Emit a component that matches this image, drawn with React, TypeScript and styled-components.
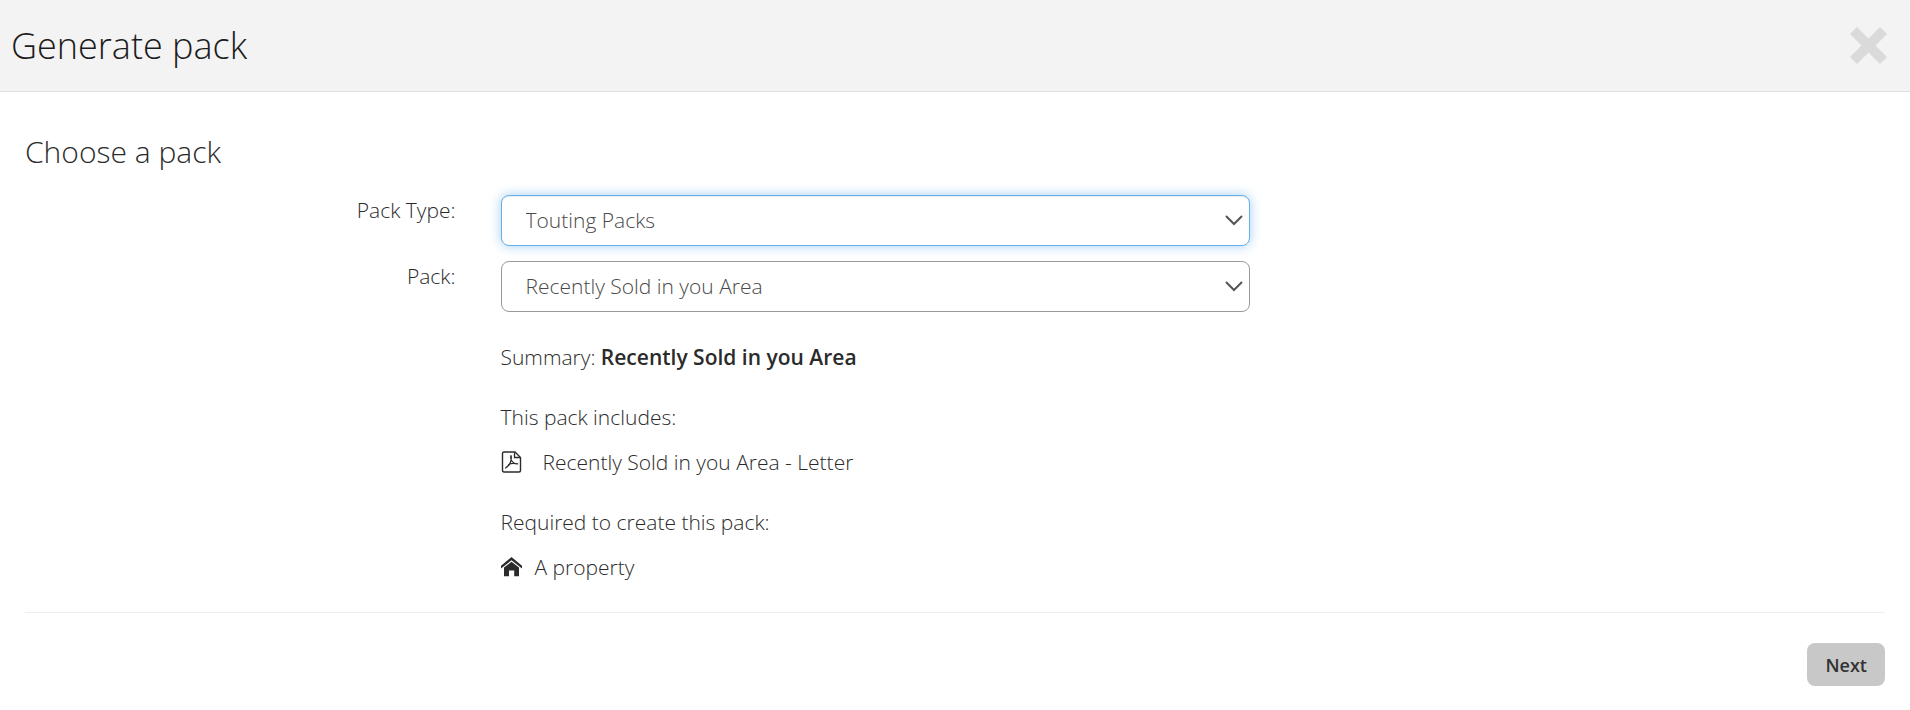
import React from "react";
import styled, { createGlobalStyle, css } from "styled-components";

const GlobalStyle = createGlobalStyle`
  *, *::before, *::after { box-sizing: border-box; }
  body {
    margin: 0;
    background: #fff;
    color: #2b2b2b;
    font-family: "Open Sans", "Noto Sans", sans-serif;
    font-size: 21px;
    font-weight: 300;
    line-height: 30px;
  }
`;

const Header = styled.header`
  display: flex;
  align-items: center;
  justify-content: space-between;
  padding: 0 23px 0 11px;
  background: #f3f3f3;
  border-bottom: 1px solid #e0e0e0;
`;

const Title = styled.h1`
  margin: 0;
  color: #1c1c1c;
  font-size: 36px;
  font-weight: 300;
  line-height: 91px;
`;

const CloseButton = styled.button`
  display: block;
  padding: 0;
  border: 0;
  background: none;
  color: #dadada;
  cursor: pointer;

  svg { display: block; }
`;

const SectionTitle = styled.h2`
  margin: 0;
  padding: 40px 25px 23px;
  font-size: 30px;
  font-weight: 300;
  line-height: 40px;
`;

const FormRow = styled.div`
  display: grid;
  grid-template-columns: 3fr 5fr 4fr;
  margin-bottom: 15px;
`;

const Label = styled.label`
  padding: 0 22px;
  text-align: right;
`;

const Field = styled.div`
  position: relative;
  margin: 0 23px;
`;

const Select = styled.select<{ $active?: boolean }>`
  display: block;
  width: 100%;
  height: 51px;
  padding: 0 40px 2px 24px;
  border: 1px solid #999;
  border-radius: 8px;
  background: #fff;
  color: #4a4a4a;
  font: inherit;
  appearance: none;
  outline: none;

  ${({ $active }) =>
    $active &&
    css`
      border-color: #66afe9;
      box-shadow: inset 0 1px 1px rgba(0, 0, 0, 0.075), 0 0 12px rgba(102, 175, 233, 0.6);
    `}
`;

const Chevron = styled.svg`
  position: absolute;
  top: 19px;
  right: 7px;
  pointer-events: none;
`;

const Details = styled.section`
  grid-column: 2;
  margin: 15px 23px 0;
`;

const Text = styled.p`
  margin: 0;

  strong { font-weight: 600; }
`;

const ItemList = styled.ul`
  margin: 15px 0 0;
  padding: 0;
  list-style: none;
`;

const Item = styled.li<{ $gap: number }>`
  display: flex;
  align-items: center;
  gap: ${({ $gap }) => $gap}px;
`;

const Group = styled.div`
  margin-top: 30px;
`;

const Footer = styled.footer`
  display: flex;
  justify-content: flex-end;
  margin: 30px 25px 0;
  padding: 30px 0 24px;
  border-top: 1px solid #eee;
`;

const NextButton = styled.button`
  height: 43px;
  padding: 0 18px;
  border: 0;
  border-radius: 8px;
  background: #c8c8c8;
  color: #333;
  font: inherit;
  font-size: 18px;
  font-weight: 600;
  cursor: pointer;
`;

const CloseIcon = () => (
  <svg width="37" height="37" viewBox="0 0 37 37" fill="currentColor" aria-hidden="true">
    <path d="M7 0 18.5 11.5 30 0 37 7 25.500 18.500 37 30 30 37 18.500 25.500 7 37 0 30 11.500 18.500 0 7Z" />
  </svg>
);

const PdfIcon = () => (
  <svg width="21" height="22" viewBox="0 0 21 22" fill="none" stroke="currentColor" aria-hidden="true">
    <path d="M3 1H14L19.500 6.500V19.500Q19.500 21 18 21H3Q1.500 21 1.500 19.500V2.500Q1.500 1 3 1Z" strokeWidth="1.400" />
    <path d="M13.500 1.500V6.500H19" strokeWidth="1.300" />
    <path d="M10 4.500C9 8 11 13 16.800 12.800M10.200 5C10.800 10 8.500 15 4.500 17M7.500 13.500C10 12.200 13 11.800 16.500 13" strokeWidth="1.200" strokeLinecap="round" />
  </svg>
);

const HomeIcon = () => (
  <svg width="21" height="20" viewBox="0 0 21 20" fill="currentColor" aria-hidden="true">
    <path d="M10.500 0 21 8.800V11.500L10.500 3.200 0 11.500V8.800Z" />
    <path d="M10.500 4.700 18 10.600V19.300H13.200V13.500H8V19.300H3V10.600Z" />
  </svg>
);

type PickerProps = { id: string; label: string; options: string[]; active?: boolean };

const Picker = ({ id, label, options, active }: PickerProps) => (
  <FormRow>
    <Label htmlFor={id}>{label}</Label>
    <Field>
      <Select id={id} $active={active}>
        {options.map((option) => (
          <option key={option}>{option}</option>
        ))}
      </Select>
      <Chevron width="18" height="13" viewBox="0 0 18 13" fill="none" stroke="#555" strokeWidth="2" aria-hidden="true">
        <path d="M1.500 2.500 9 10 16.500 2.500" strokeLinecap="round" />
      </Chevron>
    </Field>
  </FormRow>
);

export default function App() {
  return (
    <>
      <GlobalStyle />
      <Header>
        <Title>Generate pack</Title>
        <CloseButton type="button" aria-label="Close">
          <CloseIcon />
        </CloseButton>
      </Header>
      <main>
        <SectionTitle>Choose a pack</SectionTitle>
        <Picker id="pack-type" label="Pack Type:" options={["Touting Packs"]} active />
        <Picker id="pack" label="Pack:" options={["Recently Sold in you Area"]} />
        <FormRow>
          <Details>
            <Text>
              Summary: <strong>Recently Sold in you Area</strong>
            </Text>
            <Group>
              <Text>This pack includes:</Text>
              <ItemList>
                <Item $gap={21}>
                  <PdfIcon />
                  Recently Sold in you Area - Letter
                </Item>
              </ItemList>
            </Group>
            <Group>
              <Text>Required to create this pack:</Text>
              <ItemList>
                <Item $gap={13}>
                  <HomeIcon />A property
                </Item>
              </ItemList>
            </Group>
          </Details>
        </FormRow>
      </main>
      <Footer>
        <NextButton type="button">Next</NextButton>
      </Footer>
    </>
  );
}
